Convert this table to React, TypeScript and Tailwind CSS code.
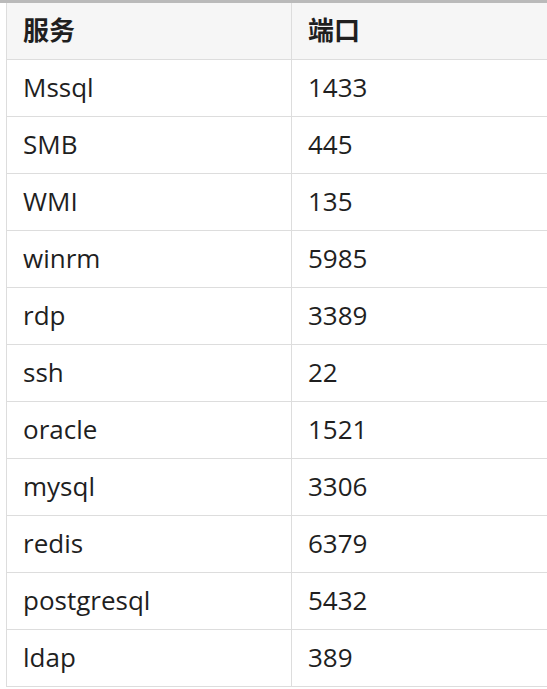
const rows: [string, string][] = [
  ['Mssql', '1433'],
  ['SMB', '445'],
  ['WMI', '135'],
  ['winrm', '5985'],
  ['rdp', '3389'],
  ['ssh', '22'],
  ['oracle', '1521'],
  ['mysql', '3306'],
  ['redis', '6379'],
  ['postgresql', '5432'],
  ['ldap', '389'],
];

export default function App() {
  return (
    <div
      className="w-[547px] h-[689px] overflow-hidden bg-white text-[#1f1f1f]"
      style={{ fontFamily: '"Open Sans", "Noto Sans CJK SC", sans-serif' }}
    >
      <div className="h-[3px] bg-[#bababa]" />
      <div className="pl-[6px]">
        <table className="w-[640px] border-collapse text-[26px]">
          <thead>
            <tr className="h-[56px] bg-[#f6f6f6]">
              <th className="w-[285px] border-x border-b border-[#dddddd] pl-[16px] text-left font-bold">服务</th>
              <th className="border-x border-b border-[#dddddd] pl-[16px] text-left font-bold">端口</th>
            </tr>
          </thead>
          <tbody>
            {rows.map(([name, port]) => (
              <tr key={name} className="h-[57px]">
                <td className="border border-[#dddddd] pl-[16px]">{name}</td>
                <td className="border border-[#dddddd] pl-[16px]">{port}</td>
              </tr>
            ))}
          </tbody>
        </table>
      </div>
    </div>
  );
}
